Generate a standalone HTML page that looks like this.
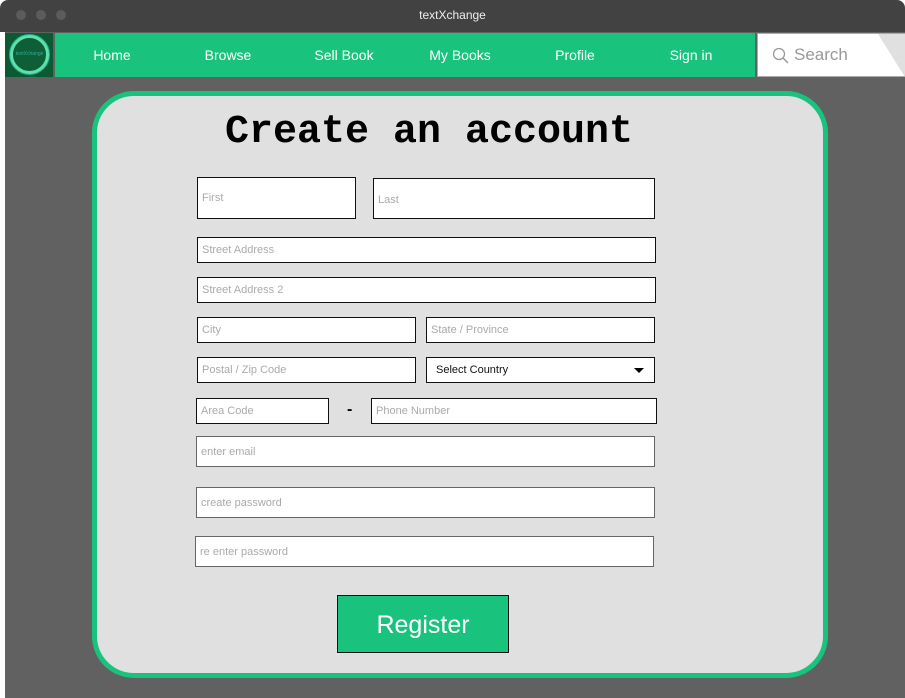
<!DOCTYPE html>
<html><head><meta charset="utf-8"><style>
*{box-sizing:border-box;margin:0;padding:0}
body{width:905px;height:698px;background:#fff;position:relative;overflow:hidden;font-family:"Liberation Sans","DejaVu Sans",sans-serif}
.a{position:absolute}
.tb{left:0;top:0;width:905px;height:32px;background:#424242;border-radius:8px 8px 0 0}
.dot{width:10px;height:10px;border-radius:50%;background:#5c5c5c;top:10px}
.main{left:5px;top:32px;width:900px;height:666px;background:#616161}
.nav{left:55px;top:33px;width:700px;height:44px;background:#19c37e}
.nav span{position:absolute;top:14px;color:#fff;font-size:14px;transform:translateX(-50%)}
.card{left:92px;top:91px;width:736px;height:587px;border:5px solid #19c37e;border-radius:42px;background:#e0e0e0}
.f{position:absolute;background:#fff;border:1px solid #111;font-size:11px;color:#aaa;padding-left:4px;display:flex;align-items:center}
.g{border-color:#666}
</style></head><body>
<div class="a tb"></div>
<div class="a dot" style="left:16px"></div><div class="a dot" style="left:36px"></div><div class="a dot" style="left:56px"></div>
<div class="a" style="left:0;top:8px;width:905px;text-align:center;color:#eee;font-size:12px">textXchange</div>
<div class="a main"></div>
<div class="a" style="left:5px;top:33px;width:48px;height:44px;background:#0b5a32"></div>
<div class="a" style="left:10px;top:35px;width:39px;height:39px;border-radius:50%;border:3px solid #5fe0a8;background:#0e5e37;box-shadow:0 0 0 1px #2a9;"></div>
<div class="a" style="left:10px;top:51px;width:39px;text-align:center;font-size:5px;color:#3a9">textXchange</div>
<div class="a nav">
<span style="left:57px">Home</span><span style="left:173px">Browse</span><span style="left:289px">Sell Book</span><span style="left:405px">My Books</span><span style="left:520px">Profile</span><span style="left:636px">Sign in</span>
</div>
<div class="a" style="left:757px;top:33px;width:148px;height:44px;background:#fff;border:1px solid #aaa"></div>
<svg class="a" style="left:878px;top:34px" width="27" height="43"><polygon points="0,0 27,0 27,43" fill="#e0e0e0"/></svg>
<svg class="a" style="left:772px;top:47px" width="18" height="18"><circle cx="7" cy="7" r="5.5" fill="none" stroke="#999" stroke-width="1.3"/><line x1="11" y1="11" x2="16" y2="16" stroke="#999" stroke-width="1.5"/></svg>
<div class="a" style="left:794px;top:45px;font-size:17px;color:#999">Search</div>
<div class="a card"></div>
<div class="a" style="left:224px;top:110px;width:410px;text-align:center;font-family:'Liberation Mono',monospace;font-weight:bold;font-size:40px;color:#000">Create an account</div>
<div class="f" style="left:197px;top:177px;width:159px;height:42px">First</div>
<div class="f" style="left:373px;top:178px;width:282px;height:41px;padding-top:2px">Last</div>
<div class="f" style="left:197px;top:237px;width:459px;height:26px">Street Address</div>
<div class="f" style="left:197px;top:277px;width:459px;height:26px">Street Address 2</div>
<div class="f" style="left:197px;top:317px;width:219px;height:26px">City</div>
<div class="f" style="left:426px;top:317px;width:229px;height:26px">State / Province</div>
<div class="f" style="left:197px;top:357px;width:219px;height:26px">Postal / Zip Code</div>
<div class="f" style="left:426px;top:357px;width:229px;height:26px;color:#111;padding-left:9px">Select Country</div>
<svg class="a" style="left:634px;top:368px" width="10" height="6"><polygon points="0,0 10,0 5,5" fill="#000"/></svg>
<div class="f" style="left:196px;top:398px;width:133px;height:26px">Area Code</div>
<div class="a" style="left:347px;top:401px;font-size:16px;font-weight:bold">-</div>
<div class="f" style="left:371px;top:398px;width:286px;height:26px">Phone Number</div>
<div class="f g" style="left:196px;top:436px;width:459px;height:31px">enter email</div>
<div class="f g" style="left:196px;top:487px;width:459px;height:31px">create password</div>
<div class="f g" style="left:195px;top:536px;width:459px;height:31px">re enter password</div>
<div class="a" style="left:337px;top:595px;width:172px;height:58px;background:#19c37e;border:1px solid #111;color:#fff;font-size:25px;text-align:center;line-height:58px">Register</div>
</body></html>
